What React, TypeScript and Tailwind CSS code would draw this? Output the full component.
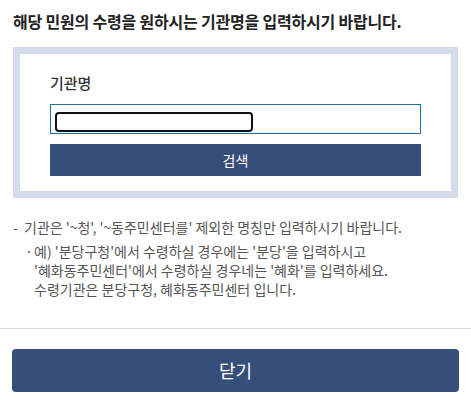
export default function App() {
  return (
    <div
      className="w-[471px] h-[407px] bg-white text-[#222]"
      style={{ fontFamily: '"Noto Sans CJK KR", "Noto Sans", sans-serif' }}
    >
      <h2 className="pt-[9px] pl-[13px] text-[16px] font-bold leading-[24px] tracking-[-0.2px] text-[#222]">
        해당 민원의 수령을 원하시는 기관명을 입력하시기 바랍니다.
      </h2>

      <div className="mx-[13px] mt-[14px] border-[7px] border-[#d4dceb] bg-white px-[30px] pt-[18px] pb-[15px]">
        <label className="block text-[15px] font-medium leading-[22px] text-[#333]">기관명</label>
        <div className="relative mt-[10px] h-[30px] border border-[#1f6d98] bg-white">
          <div className="absolute left-[4px] top-[7px] h-[20px] w-[198px] rounded-[4px] border-2 border-[#111]" />
        </div>
        <button
          type="button"
          className="mt-[10px] block h-[32px] w-full bg-[#354f7a] text-[14px] leading-[32px] text-white"
        >
          검색
        </button>
      </div>

      <div className="mt-[20px] pl-[13px] text-[14px] leading-[19px] text-[#555]">
        <p className="flex">
          <span className="w-[11px] shrink-0">-</span>
          <span>기관은 '~청', '~동주민센터를' 제외한 명칭만 입력하시기 바랍니다.</span>
        </p>
        <div className="mt-[5px] flex pl-[12px]">
          <span className="w-[9px] shrink-0">·</span>
          <div>
            <p>예) '분당구청'에서 수령하실 경우에는 '분당'을 입력하시고</p>
            <p>'혜화동주민센터'에서 수령하실 경우네는 '혜화'를 입력하세요.</p>
            <p>수령기관은 분당구청, 혜화동주민센터 입니다.</p>
          </div>
        </div>
      </div>

      <div className="mt-[29px] border-t border-[#dcdcdc]" />

      <div className="px-[12px] pt-[20px]">
        <button
          type="button"
          className="block h-[43px] w-full rounded-[4px] bg-[#354f7a] text-[18px] text-white"
        >
          닫기
        </button>
      </div>
    </div>
  );
}
